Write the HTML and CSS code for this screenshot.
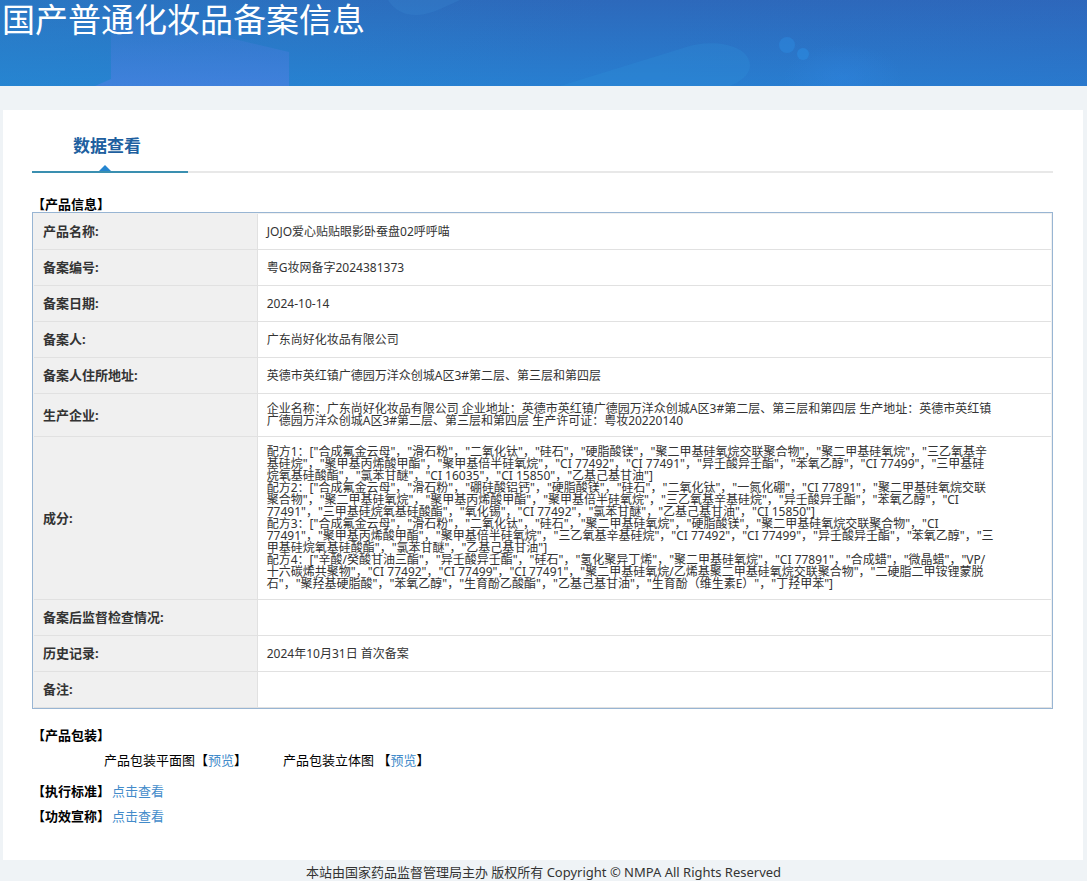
FILE: index.html
```html
<!DOCTYPE html>
<html lang="zh-CN">
<head>
    <meta charset="UTF-8">
    <title>国产普通化妆品备案信息</title>
    <link rel="stylesheet" href="styles.css">
</head>
<body>
    <header class="banner">
        <svg class="banner-bg" viewBox="0 0 1087 86" preserveAspectRatio="none" aria-hidden="true">
            <defs>
                <linearGradient id="sky" x1="0" x2="0" y1="0" y2="1">
                    <stop offset="0" stop-color="#2d69bb"/>
                    <stop offset="1" stop-color="#287fd1"/>
                </linearGradient>
                <linearGradient id="side" x1="0" x2="1" y1="0" y2="0">
                    <stop offset="0" stop-color="#2490d2" stop-opacity=".35"/>
                    <stop offset=".45" stop-color="#2490d2" stop-opacity=".05"/>
                    <stop offset=".6" stop-color="#3060bd" stop-opacity="0"/>
                    <stop offset="1" stop-color="#3060bd" stop-opacity=".2"/>
                </linearGradient>
                <linearGradient id="block" x1="0" x2="0" y1="0" y2="1">
                    <stop offset="0" stop-color="#4a78d8" stop-opacity=".1"/>
                    <stop offset="1" stop-color="#4a80e0" stop-opacity=".7"/>
                </linearGradient>
                <radialGradient id="glow">
                    <stop offset="0" stop-color="#2f86e2" stop-opacity=".4"/>
                    <stop offset="1" stop-color="#2f86e2" stop-opacity="0"/>
                </radialGradient>
            </defs>
            <rect width="1087" height="86" fill="url(#sky)"/>
            <rect width="1087" height="86" fill="url(#side)"/>
            <path d="M111 12 L200 31 L289 52 V86 H95 L111 79 Z" fill="url(#block)"/>
            <path d="M388 0 C394 10 405 16 418 15 C432 14 442 8 460 0 Z" fill="#3b8ad2" fill-opacity=".25"/>
            <path d="M560 86 L680 49 C710 37 749 44 750 65 C750 73 744 80 730 86 Z" fill="#2f92da" fill-opacity=".25"/>
            <ellipse cx="843" cy="78" rx="60" ry="34" fill="url(#glow)"/>
            <circle cx="787" cy="45" r="8" fill="#2b8ae0" fill-opacity=".5"/>
            <circle cx="803" cy="54" r="6" fill="#2b8ae0" fill-opacity=".6"/>
        </svg>
        <h1>国产普通化妆品备案信息</h1>
    </header>

    <main class="container">
        <div class="tabs">
            <h2 class="tab">数据查看</h2>
        </div>

        <h3>【产品信息】</h3>
        <table class="info">
            <tbody>
                <tr>
                    <th scope="row">产品名称:</th>
                    <td>JOJO爱心贴贴眼影卧蚕盘02呼呼喵</td>
                </tr>
                <tr>
                    <th scope="row">备案编号:</th>
                    <td>粤G妆网备字2024381373</td>
                </tr>
                <tr>
                    <th scope="row">备案日期:</th>
                    <td>2024-10-14</td>
                </tr>
                <tr>
                    <th scope="row">备案人:</th>
                    <td>广东尚好化妆品有限公司</td>
                </tr>
                <tr>
                    <th scope="row">备案人住所地址:</th>
                    <td>英德市英红镇广德园万洋众创城A区3#第二层、第三层和第四层</td>
                </tr>
                <tr>
                    <th scope="row">生产企业:</th>
                    <td>企业名称：广东尚好化妆品有限公司 企业地址：英德市英红镇广德园万洋众创城A区3#第二层、第三层和第四层 生产地址：英德市英红镇<br>
                        广德园万洋众创城A区3#第二层、第三层和第四层 生产许可证：粤妆20220140</td>
                </tr>
                <tr>
                    <th scope="row">成分:</th>
                    <td>配方1：["合成氟金云母"，"滑石粉"，"二氧化钛"，"硅石"，"硬脂酸镁"，"聚二甲基硅氧烷交联聚合物"，"聚二甲基硅氧烷"，"三乙氧基辛<br>
                        基硅烷"，"聚甲基丙烯酸甲酯"，"聚甲基倍半硅氧烷"，"CI 77492"，"CI 77491"，"异壬酸异壬酯"，"苯氧乙醇"，"CI 77499"，"三甲基硅<br>
                        烷氧基硅酸酯"，"氯苯甘醚"，"CI 16035"，"CI 15850"，"乙基己基甘油"]<br>
                        配方2：["合成氟金云母"，"滑石粉"，"硼硅酸铝钙"，"硬脂酸镁"，"硅石"，"二氧化钛"，"一氮化硼"，"CI 77891"，"聚二甲基硅氧烷交联<br>
                        聚合物"，"聚二甲基硅氧烷"，"聚甲基丙烯酸甲酯"，"聚甲基倍半硅氧烷"，"三乙氧基辛基硅烷"，"异壬酸异壬酯"，"苯氧乙醇"，"CI<br>
                        77491"，"三甲基硅烷氧基硅酸酯"，"氧化锡"，"CI 77492"，"氯苯甘醚"，"乙基己基甘油"，"CI 15850"]<br>
                        配方3：["合成氟金云母"，"滑石粉"，"二氧化钛"，"硅石"，"聚二甲基硅氧烷"，"硬脂酸镁"，"聚二甲基硅氧烷交联聚合物"，"CI<br>
                        77491"，"聚甲基丙烯酸甲酯"，"聚甲基倍半硅氧烷"，"三乙氧基辛基硅烷"，"CI 77492"，"CI 77499"，"异壬酸异壬酯"，"苯氧乙醇"，"三<br>
                        甲基硅烷氧基硅酸酯"，"氯苯甘醚"，"乙基己基甘油"]<br>
                        配方4：["辛酸/癸酸甘油三酯"，"异壬酸异壬酯"，"硅石"，"氢化聚异丁烯"，"聚二甲基硅氧烷"，"CI 77891"，"合成蜡"，"微晶蜡"，"VP/<br>
                        十六碳烯共聚物"，"CI 77492"，"CI 77499"，"CI 77491"，"聚二甲基硅氧烷/乙烯基聚二甲基硅氧烷交联聚合物"，"二硬脂二甲铵锂蒙脱<br>
                        石"，"聚羟基硬脂酸"，"苯氧乙醇"，"生育酚乙酸酯"，"乙基己基甘油"，"生育酚（维生素E）"，"丁羟甲苯"]</td>
                </tr>
                <tr>
                    <th scope="row">备案后监督检查情况:</th>
                    <td></td>
                </tr>
                <tr>
                    <th scope="row">历史记录:</th>
                    <td>2024年10月31日 首次备案</td>
                </tr>
                <tr>
                    <th scope="row">备注:</th>
                    <td></td>
                </tr>
            </tbody>
        </table>

        <section class="package">
            <h3>【产品包装】</h3>
            <div class="previews">
                <span>产品包装平面图【<a href="#">预览</a>】</span>
                <span>产品包装立体图 【<a href="#">预览</a>】</span>
            </div>
        </section>
        <div class="line"><h3>【执行标准】</h3><a href="#">点击查看</a></div>
        <div class="line"><h3>【功效宣称】</h3><a href="#">点击查看</a></div>
    </main>

    <footer>本站由国家药品监督管理局主办 版权所有 Copyright © NMPA All Rights Reserved</footer>
</body>
</html>
```
FILE: styles.css
```css
* {
    box-sizing: border-box;
}
body {
    margin: 0;
    background-color: #eff3f6;
    color: #000;
    font-family: "Noto Sans", "Noto Sans CJK SC", sans-serif;
    font-size: 13px;
    line-height: 25px;
}
h1, h2, h3 {
    margin: 0;
}
a {
    color: #428bca;
    text-decoration: none;
}
a:hover {
    text-decoration: underline;
}
.banner {
    position: relative;
    height: 86px;
}
.banner-bg {
    position: absolute;
    top: 0;
    left: 0;
    width: 100%;
    height: 100%;
}
.banner h1 {
    position: relative;
    padding-left: 2px;
    color: #fff;
    font-size: 33px;
    font-weight: 400;
    line-height: 40px;
}
.container {
    margin: 24px 4px 0 3px;
    padding: 16px 30px 31px 29px;
    background-color: #fff;
}
.tabs {
    display: flex;
    margin-bottom: 23px;
    border-bottom: 2px solid #e8e8e8;
}
.tab {
    position: relative;
    width: 156px;
    margin-bottom: -2px;
    padding: 0 0 5px 41px;
    border-bottom: 2px solid #3a8fb0;
    color: #205f9f;
    font-size: 17px;
    line-height: 40px;
}
.tab::after {
    content: "";
    position: absolute;
    bottom: 0;
    left: 67px;
    border: 6px solid transparent;
    border-top: 0;
    border-bottom-color: #2585d0;
}
h3 {
    font-size: 13px;
    line-height: 25px;
}
.container > h3 {
    line-height: 16px;
}
.info {
    width: 100%;
    padding: 1px 1px 0;
    border: 1px solid #98b5d3;
    border-spacing: 0;
    background-color: #f0f0f0;
}
.info th, .info td {
    padding: 9px;
    border-bottom: 1px solid #e1e1e1;
    color: #333;
    text-align: left;
}
.info th {
    width: 22%;
    border-right: 1px solid #e1e1e1;
    font-size: 13px;
    line-height: 17px;
}
.info td {
    background-color: #fff;
    font-size: 12px;
    line-height: 12px;
    white-space: nowrap;
}
.package {
    padding-top: 14px;
    margin-bottom: 6px;
}
.previews {
    display: flex;
    gap: 36px;
    padding-left: 72px;
}
.line {
    display: flex;
    gap: 2px;
}
footer {
    color: #333;
    text-align: center;
}
```
